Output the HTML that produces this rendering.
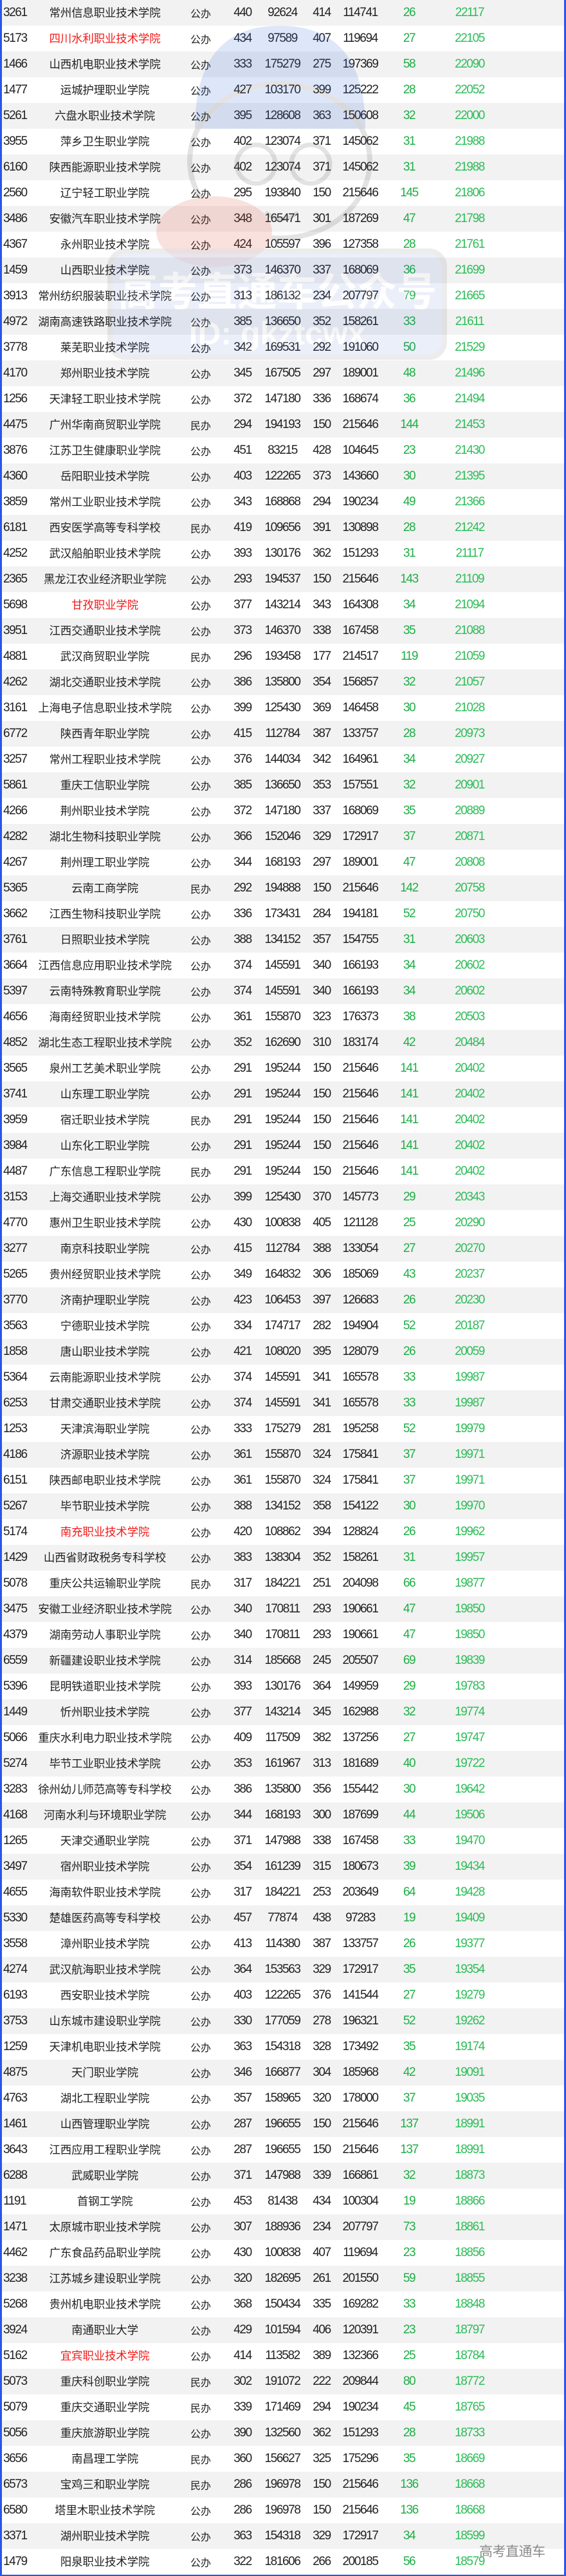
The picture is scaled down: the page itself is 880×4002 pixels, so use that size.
<!DOCTYPE html>
<html><head><meta charset="utf-8">
<style>
html,body{margin:0;padding:0;background:#fff}
#w{position:relative;width:874px;height:4000px;border-left:3px solid #2a55e8;border-right:3px solid #2a55e8;border-bottom:2px solid #2a55e8;overflow:hidden;font-family:"Liberation Sans","Noto Sans CJK SC",sans-serif;color:#222}
.r{position:relative;height:40px;margin:0}
.r:nth-child(odd){background:#f2f2f2}
.r span{position:absolute;top:0;line-height:40px;text-align:center;white-space:nowrap;font-size:19px;letter-spacing:-1.4px}
.r span:nth-child(1){left:2px;text-align:left}
.r span:nth-child(2){left:40px;width:240px;font-family:"Noto Sans CJK SC",sans-serif;font-size:17.5px;letter-spacing:-0.2px}
.r span:nth-child(3){left:281px;width:56px;font-family:"Noto Sans CJK SC",sans-serif;font-size:16px;letter-spacing:0}
.r span:nth-child(4){left:349px;width:50px}
.r span:nth-child(5){left:396px;width:80px}
.r span:nth-child(6){left:472px;width:50px}
.r span:nth-child(7){left:517px;width:80px}
.r span:nth-child(8){left:603px;width:60px;color:#1fae46}
.r span:nth-child(9){left:687px;width:80px;color:#2dbd58}
.red{color:#f41a1a}
#wm{position:absolute;left:742px;top:3948px;font-family:"Noto Sans CJK SC",sans-serif;font-size:21px;color:#8a8a8a;letter-spacing:-0.5px}
#mark{position:absolute;left:0;top:0;width:880px;height:600px;pointer-events:none;opacity:.16}
</style></head><body>
<div id="w">
<p class="r"><span>3261</span><span>常州信息职业技术学院</span><span>公办</span><span>440</span><span>92624</span><span>414</span><span>114741</span><span>26</span><span>22117</span></p>
<p class="r"><span>5173</span><span class="red">四川水利职业技术学院</span><span>公办</span><span>434</span><span>97589</span><span>407</span><span>119694</span><span>27</span><span>22105</span></p>
<p class="r"><span>1466</span><span>山西机电职业技术学院</span><span>公办</span><span>333</span><span>175279</span><span>275</span><span>197369</span><span>58</span><span>22090</span></p>
<p class="r"><span>1477</span><span>运城护理职业学院</span><span>公办</span><span>427</span><span>103170</span><span>399</span><span>125222</span><span>28</span><span>22052</span></p>
<p class="r"><span>5261</span><span>六盘水职业技术学院</span><span>公办</span><span>395</span><span>128608</span><span>363</span><span>150608</span><span>32</span><span>22000</span></p>
<p class="r"><span>3955</span><span>萍乡卫生职业学院</span><span>公办</span><span>402</span><span>123074</span><span>371</span><span>145062</span><span>31</span><span>21988</span></p>
<p class="r"><span>6160</span><span>陕西能源职业技术学院</span><span>公办</span><span>402</span><span>123074</span><span>371</span><span>145062</span><span>31</span><span>21988</span></p>
<p class="r"><span>2560</span><span>辽宁轻工职业学院</span><span>公办</span><span>295</span><span>193840</span><span>150</span><span>215646</span><span>145</span><span>21806</span></p>
<p class="r"><span>3486</span><span>安徽汽车职业技术学院</span><span>公办</span><span>348</span><span>165471</span><span>301</span><span>187269</span><span>47</span><span>21798</span></p>
<p class="r"><span>4367</span><span>永州职业技术学院</span><span>公办</span><span>424</span><span>105597</span><span>396</span><span>127358</span><span>28</span><span>21761</span></p>
<p class="r"><span>1459</span><span>山西职业技术学院</span><span>公办</span><span>373</span><span>146370</span><span>337</span><span>168069</span><span>36</span><span>21699</span></p>
<p class="r"><span>3913</span><span>常州纺织服装职业技术学院</span><span>公办</span><span>313</span><span>186132</span><span>234</span><span>207797</span><span>79</span><span>21665</span></p>
<p class="r"><span>4972</span><span>湖南高速铁路职业技术学院</span><span>公办</span><span>385</span><span>136650</span><span>352</span><span>158261</span><span>33</span><span>21611</span></p>
<p class="r"><span>3778</span><span>莱芜职业技术学院</span><span>公办</span><span>342</span><span>169531</span><span>292</span><span>191060</span><span>50</span><span>21529</span></p>
<p class="r"><span>4170</span><span>郑州职业技术学院</span><span>公办</span><span>345</span><span>167505</span><span>297</span><span>189001</span><span>48</span><span>21496</span></p>
<p class="r"><span>1256</span><span>天津轻工职业技术学院</span><span>公办</span><span>372</span><span>147180</span><span>336</span><span>168674</span><span>36</span><span>21494</span></p>
<p class="r"><span>4475</span><span>广州华南商贸职业学院</span><span>民办</span><span>294</span><span>194193</span><span>150</span><span>215646</span><span>144</span><span>21453</span></p>
<p class="r"><span>3876</span><span>江苏卫生健康职业学院</span><span>公办</span><span>451</span><span>83215</span><span>428</span><span>104645</span><span>23</span><span>21430</span></p>
<p class="r"><span>4360</span><span>岳阳职业技术学院</span><span>公办</span><span>403</span><span>122265</span><span>373</span><span>143660</span><span>30</span><span>21395</span></p>
<p class="r"><span>3859</span><span>常州工业职业技术学院</span><span>公办</span><span>343</span><span>168868</span><span>294</span><span>190234</span><span>49</span><span>21366</span></p>
<p class="r"><span>6181</span><span>西安医学高等专科学校</span><span>民办</span><span>419</span><span>109656</span><span>391</span><span>130898</span><span>28</span><span>21242</span></p>
<p class="r"><span>4252</span><span>武汉船舶职业技术学院</span><span>公办</span><span>393</span><span>130176</span><span>362</span><span>151293</span><span>31</span><span>21117</span></p>
<p class="r"><span>2365</span><span>黑龙江农业经济职业学院</span><span>公办</span><span>293</span><span>194537</span><span>150</span><span>215646</span><span>143</span><span>21109</span></p>
<p class="r"><span>5698</span><span class="red">甘孜职业学院</span><span>公办</span><span>377</span><span>143214</span><span>343</span><span>164308</span><span>34</span><span>21094</span></p>
<p class="r"><span>3951</span><span>江西交通职业技术学院</span><span>公办</span><span>373</span><span>146370</span><span>338</span><span>167458</span><span>35</span><span>21088</span></p>
<p class="r"><span>4881</span><span>武汉商贸职业学院</span><span>民办</span><span>296</span><span>193458</span><span>177</span><span>214517</span><span>119</span><span>21059</span></p>
<p class="r"><span>4262</span><span>湖北交通职业技术学院</span><span>公办</span><span>386</span><span>135800</span><span>354</span><span>156857</span><span>32</span><span>21057</span></p>
<p class="r"><span>3161</span><span>上海电子信息职业技术学院</span><span>公办</span><span>399</span><span>125430</span><span>369</span><span>146458</span><span>30</span><span>21028</span></p>
<p class="r"><span>6772</span><span>陕西青年职业学院</span><span>公办</span><span>415</span><span>112784</span><span>387</span><span>133757</span><span>28</span><span>20973</span></p>
<p class="r"><span>3257</span><span>常州工程职业技术学院</span><span>公办</span><span>376</span><span>144034</span><span>342</span><span>164961</span><span>34</span><span>20927</span></p>
<p class="r"><span>5861</span><span>重庆工信职业学院</span><span>公办</span><span>385</span><span>136650</span><span>353</span><span>157551</span><span>32</span><span>20901</span></p>
<p class="r"><span>4266</span><span>荆州职业技术学院</span><span>公办</span><span>372</span><span>147180</span><span>337</span><span>168069</span><span>35</span><span>20889</span></p>
<p class="r"><span>4282</span><span>湖北生物科技职业学院</span><span>公办</span><span>366</span><span>152046</span><span>329</span><span>172917</span><span>37</span><span>20871</span></p>
<p class="r"><span>4267</span><span>荆州理工职业学院</span><span>公办</span><span>344</span><span>168193</span><span>297</span><span>189001</span><span>47</span><span>20808</span></p>
<p class="r"><span>5365</span><span>云南工商学院</span><span>民办</span><span>292</span><span>194888</span><span>150</span><span>215646</span><span>142</span><span>20758</span></p>
<p class="r"><span>3662</span><span>江西生物科技职业学院</span><span>公办</span><span>336</span><span>173431</span><span>284</span><span>194181</span><span>52</span><span>20750</span></p>
<p class="r"><span>3761</span><span>日照职业技术学院</span><span>公办</span><span>388</span><span>134152</span><span>357</span><span>154755</span><span>31</span><span>20603</span></p>
<p class="r"><span>3664</span><span>江西信息应用职业技术学院</span><span>公办</span><span>374</span><span>145591</span><span>340</span><span>166193</span><span>34</span><span>20602</span></p>
<p class="r"><span>5397</span><span>云南特殊教育职业学院</span><span>公办</span><span>374</span><span>145591</span><span>340</span><span>166193</span><span>34</span><span>20602</span></p>
<p class="r"><span>4656</span><span>海南经贸职业技术学院</span><span>公办</span><span>361</span><span>155870</span><span>323</span><span>176373</span><span>38</span><span>20503</span></p>
<p class="r"><span>4852</span><span>湖北生态工程职业技术学院</span><span>公办</span><span>352</span><span>162690</span><span>310</span><span>183174</span><span>42</span><span>20484</span></p>
<p class="r"><span>3565</span><span>泉州工艺美术职业学院</span><span>公办</span><span>291</span><span>195244</span><span>150</span><span>215646</span><span>141</span><span>20402</span></p>
<p class="r"><span>3741</span><span>山东理工职业学院</span><span>公办</span><span>291</span><span>195244</span><span>150</span><span>215646</span><span>141</span><span>20402</span></p>
<p class="r"><span>3959</span><span>宿迁职业技术学院</span><span>民办</span><span>291</span><span>195244</span><span>150</span><span>215646</span><span>141</span><span>20402</span></p>
<p class="r"><span>3984</span><span>山东化工职业学院</span><span>公办</span><span>291</span><span>195244</span><span>150</span><span>215646</span><span>141</span><span>20402</span></p>
<p class="r"><span>4487</span><span>广东信息工程职业学院</span><span>民办</span><span>291</span><span>195244</span><span>150</span><span>215646</span><span>141</span><span>20402</span></p>
<p class="r"><span>3153</span><span>上海交通职业技术学院</span><span>公办</span><span>399</span><span>125430</span><span>370</span><span>145773</span><span>29</span><span>20343</span></p>
<p class="r"><span>4770</span><span>惠州卫生职业技术学院</span><span>公办</span><span>430</span><span>100838</span><span>405</span><span>121128</span><span>25</span><span>20290</span></p>
<p class="r"><span>3277</span><span>南京科技职业学院</span><span>公办</span><span>415</span><span>112784</span><span>388</span><span>133054</span><span>27</span><span>20270</span></p>
<p class="r"><span>5265</span><span>贵州经贸职业技术学院</span><span>公办</span><span>349</span><span>164832</span><span>306</span><span>185069</span><span>43</span><span>20237</span></p>
<p class="r"><span>3770</span><span>济南护理职业学院</span><span>公办</span><span>423</span><span>106453</span><span>397</span><span>126683</span><span>26</span><span>20230</span></p>
<p class="r"><span>3563</span><span>宁德职业技术学院</span><span>公办</span><span>334</span><span>174717</span><span>282</span><span>194904</span><span>52</span><span>20187</span></p>
<p class="r"><span>1858</span><span>唐山职业技术学院</span><span>公办</span><span>421</span><span>108020</span><span>395</span><span>128079</span><span>26</span><span>20059</span></p>
<p class="r"><span>5364</span><span>云南能源职业技术学院</span><span>公办</span><span>374</span><span>145591</span><span>341</span><span>165578</span><span>33</span><span>19987</span></p>
<p class="r"><span>6253</span><span>甘肃交通职业技术学院</span><span>公办</span><span>374</span><span>145591</span><span>341</span><span>165578</span><span>33</span><span>19987</span></p>
<p class="r"><span>1253</span><span>天津滨海职业学院</span><span>公办</span><span>333</span><span>175279</span><span>281</span><span>195258</span><span>52</span><span>19979</span></p>
<p class="r"><span>4186</span><span>济源职业技术学院</span><span>公办</span><span>361</span><span>155870</span><span>324</span><span>175841</span><span>37</span><span>19971</span></p>
<p class="r"><span>6151</span><span>陕西邮电职业技术学院</span><span>公办</span><span>361</span><span>155870</span><span>324</span><span>175841</span><span>37</span><span>19971</span></p>
<p class="r"><span>5267</span><span>毕节职业技术学院</span><span>公办</span><span>388</span><span>134152</span><span>358</span><span>154122</span><span>30</span><span>19970</span></p>
<p class="r"><span>5174</span><span class="red">南充职业技术学院</span><span>公办</span><span>420</span><span>108862</span><span>394</span><span>128824</span><span>26</span><span>19962</span></p>
<p class="r"><span>1429</span><span>山西省财政税务专科学校</span><span>公办</span><span>383</span><span>138304</span><span>352</span><span>158261</span><span>31</span><span>19957</span></p>
<p class="r"><span>5078</span><span>重庆公共运输职业学院</span><span>民办</span><span>317</span><span>184221</span><span>251</span><span>204098</span><span>66</span><span>19877</span></p>
<p class="r"><span>3475</span><span>安徽工业经济职业技术学院</span><span>公办</span><span>340</span><span>170811</span><span>293</span><span>190661</span><span>47</span><span>19850</span></p>
<p class="r"><span>4379</span><span>湖南劳动人事职业学院</span><span>公办</span><span>340</span><span>170811</span><span>293</span><span>190661</span><span>47</span><span>19850</span></p>
<p class="r"><span>6559</span><span>新疆建设职业技术学院</span><span>公办</span><span>314</span><span>185668</span><span>245</span><span>205507</span><span>69</span><span>19839</span></p>
<p class="r"><span>5396</span><span>昆明铁道职业技术学院</span><span>公办</span><span>393</span><span>130176</span><span>364</span><span>149959</span><span>29</span><span>19783</span></p>
<p class="r"><span>1449</span><span>忻州职业技术学院</span><span>公办</span><span>377</span><span>143214</span><span>345</span><span>162988</span><span>32</span><span>19774</span></p>
<p class="r"><span>5066</span><span>重庆水利电力职业技术学院</span><span>公办</span><span>409</span><span>117509</span><span>382</span><span>137256</span><span>27</span><span>19747</span></p>
<p class="r"><span>5274</span><span>毕节工业职业技术学院</span><span>公办</span><span>353</span><span>161967</span><span>313</span><span>181689</span><span>40</span><span>19722</span></p>
<p class="r"><span>3283</span><span>徐州幼儿师范高等专科学校</span><span>公办</span><span>386</span><span>135800</span><span>356</span><span>155442</span><span>30</span><span>19642</span></p>
<p class="r"><span>4168</span><span>河南水利与环境职业学院</span><span>公办</span><span>344</span><span>168193</span><span>300</span><span>187699</span><span>44</span><span>19506</span></p>
<p class="r"><span>1265</span><span>天津交通职业学院</span><span>公办</span><span>371</span><span>147988</span><span>338</span><span>167458</span><span>33</span><span>19470</span></p>
<p class="r"><span>3497</span><span>宿州职业技术学院</span><span>公办</span><span>354</span><span>161239</span><span>315</span><span>180673</span><span>39</span><span>19434</span></p>
<p class="r"><span>4655</span><span>海南软件职业技术学院</span><span>公办</span><span>317</span><span>184221</span><span>253</span><span>203649</span><span>64</span><span>19428</span></p>
<p class="r"><span>5330</span><span>楚雄医药高等专科学校</span><span>公办</span><span>457</span><span>77874</span><span>438</span><span>97283</span><span>19</span><span>19409</span></p>
<p class="r"><span>3558</span><span>漳州职业技术学院</span><span>公办</span><span>413</span><span>114380</span><span>387</span><span>133757</span><span>26</span><span>19377</span></p>
<p class="r"><span>4274</span><span>武汉航海职业技术学院</span><span>公办</span><span>364</span><span>153563</span><span>329</span><span>172917</span><span>35</span><span>19354</span></p>
<p class="r"><span>6193</span><span>西安职业技术学院</span><span>公办</span><span>403</span><span>122265</span><span>376</span><span>141544</span><span>27</span><span>19279</span></p>
<p class="r"><span>3753</span><span>山东城市建设职业学院</span><span>公办</span><span>330</span><span>177059</span><span>278</span><span>196321</span><span>52</span><span>19262</span></p>
<p class="r"><span>1259</span><span>天津机电职业技术学院</span><span>公办</span><span>363</span><span>154318</span><span>328</span><span>173492</span><span>35</span><span>19174</span></p>
<p class="r"><span>4875</span><span>天门职业学院</span><span>公办</span><span>346</span><span>166877</span><span>304</span><span>185968</span><span>42</span><span>19091</span></p>
<p class="r"><span>4763</span><span>湖北工程职业学院</span><span>公办</span><span>357</span><span>158965</span><span>320</span><span>178000</span><span>37</span><span>19035</span></p>
<p class="r"><span>1461</span><span>山西管理职业学院</span><span>公办</span><span>287</span><span>196655</span><span>150</span><span>215646</span><span>137</span><span>18991</span></p>
<p class="r"><span>3643</span><span>江西应用工程职业学院</span><span>公办</span><span>287</span><span>196655</span><span>150</span><span>215646</span><span>137</span><span>18991</span></p>
<p class="r"><span>6288</span><span>武威职业学院</span><span>公办</span><span>371</span><span>147988</span><span>339</span><span>166861</span><span>32</span><span>18873</span></p>
<p class="r"><span>1191</span><span>首钢工学院</span><span>公办</span><span>453</span><span>81438</span><span>434</span><span>100304</span><span>19</span><span>18866</span></p>
<p class="r"><span>1471</span><span>太原城市职业技术学院</span><span>公办</span><span>307</span><span>188936</span><span>234</span><span>207797</span><span>73</span><span>18861</span></p>
<p class="r"><span>4462</span><span>广东食品药品职业学院</span><span>公办</span><span>430</span><span>100838</span><span>407</span><span>119694</span><span>23</span><span>18856</span></p>
<p class="r"><span>3238</span><span>江苏城乡建设职业学院</span><span>公办</span><span>320</span><span>182695</span><span>261</span><span>201550</span><span>59</span><span>18855</span></p>
<p class="r"><span>5268</span><span>贵州机电职业技术学院</span><span>公办</span><span>368</span><span>150434</span><span>335</span><span>169282</span><span>33</span><span>18848</span></p>
<p class="r"><span>3924</span><span>南通职业大学</span><span>公办</span><span>429</span><span>101594</span><span>406</span><span>120391</span><span>23</span><span>18797</span></p>
<p class="r"><span>5162</span><span class="red">宜宾职业技术学院</span><span>公办</span><span>414</span><span>113582</span><span>389</span><span>132366</span><span>25</span><span>18784</span></p>
<p class="r"><span>5073</span><span>重庆科创职业学院</span><span>民办</span><span>302</span><span>191072</span><span>222</span><span>209844</span><span>80</span><span>18772</span></p>
<p class="r"><span>5079</span><span>重庆交通职业学院</span><span>民办</span><span>339</span><span>171469</span><span>294</span><span>190234</span><span>45</span><span>18765</span></p>
<p class="r"><span>5056</span><span>重庆旅游职业学院</span><span>公办</span><span>390</span><span>132560</span><span>362</span><span>151293</span><span>28</span><span>18733</span></p>
<p class="r"><span>3656</span><span>南昌理工学院</span><span>民办</span><span>360</span><span>156627</span><span>325</span><span>175296</span><span>35</span><span>18669</span></p>
<p class="r"><span>6573</span><span>宝鸡三和职业学院</span><span>民办</span><span>286</span><span>196978</span><span>150</span><span>215646</span><span>136</span><span>18668</span></p>
<p class="r"><span>6580</span><span>塔里木职业技术学院</span><span>公办</span><span>286</span><span>196978</span><span>150</span><span>215646</span><span>136</span><span>18668</span></p>
<p class="r"><span>3371</span><span>湖州职业技术学院</span><span>公办</span><span>363</span><span>154318</span><span>329</span><span>172917</span><span>34</span><span>18599</span></p>
<p class="r"><span>1479</span><span>阳泉职业技术学院</span><span>公办</span><span>322</span><span>181606</span><span>266</span><span>200185</span><span>56</span><span>18579</span></p>
<svg id="mark" viewBox="0 0 880 600">
<path d="M300 200 Q300 40 432 40 Q565 40 565 200 Z" fill="#3a6ee0"/>
<ellipse cx="432" cy="250" rx="140" ry="120" fill="none" stroke="#555" stroke-width="8"/>
<circle cx="395" cy="255" r="30" fill="none" stroke="#555" stroke-width="7"/>
<circle cx="480" cy="255" r="30" fill="none" stroke="#555" stroke-width="7"/>
<path d="M410 330 Q435 350 460 330" fill="none" stroke="#555" stroke-width="6"/>
<ellipse cx="330" cy="360" rx="90" ry="55" fill="#e04a3a"/>
<rect x="168" y="390" width="520" height="165" rx="24" fill="#3a5fd0" opacity=".6" stroke="#444" stroke-width="8"/>
<text x="428" y="475" text-anchor="middle" font-family="Noto Sans CJK SC,sans-serif" font-weight="bold" font-size="62" fill="#fff">高考直通车公众号</text>
<text x="428" y="535" text-anchor="middle" font-family="Liberation Sans,sans-serif" font-weight="bold" font-size="50" fill="#fff">ID: gkztcwx</text>
</svg>
<div id="wm">高考直通车</div>
</div>
</body></html>
